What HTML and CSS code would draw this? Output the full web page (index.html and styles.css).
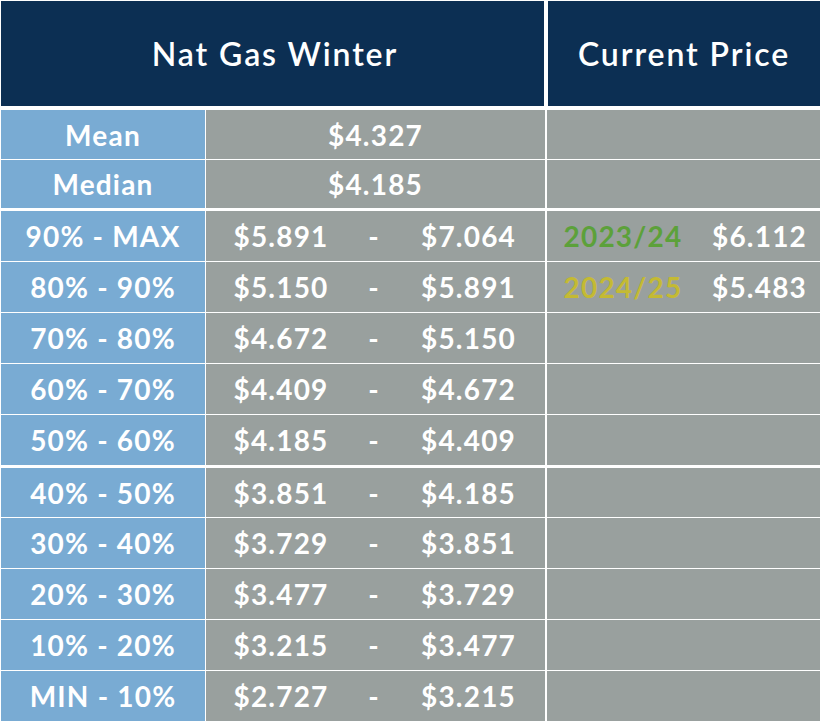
FILE: index.html
```html
<!DOCTYPE html>
<html>
<head>
<meta charset="utf-8">
<link rel="stylesheet" href="styles.css">
</head>
<body>
<div class="table">
  <div class="head">
    <div class="hcell hmain">Nat Gas Winter</div>
    <div class="hcell hside">Current Price</div>
  </div>

  <div class="group">
    <div class="row r49">
      <div class="label">Mean</div>
      <div class="val single">$4.327</div>
      <div class="price"></div>
    </div>
    <div class="row r48">
      <div class="label">Median</div>
      <div class="val single">$4.185</div>
      <div class="price"></div>
    </div>
  </div>

  <div class="group">
    <div class="row">
      <div class="label">90% - MAX</div>
      <div class="val range"><span>$5.891</span><span>-</span><span>$7.064</span></div>
      <div class="price cur"><span class="yr green">2023/24</span><span>$6.112</span></div>
    </div>
    <div class="row">
      <div class="label">80% - 90%</div>
      <div class="val range"><span>$5.150</span><span>-</span><span>$5.891</span></div>
      <div class="price cur"><span class="yr olive">2024/25</span><span>$5.483</span></div>
    </div>
    <div class="row">
      <div class="label">70% - 80%</div>
      <div class="val range"><span>$4.672</span><span>-</span><span>$5.150</span></div>
      <div class="price"></div>
    </div>
    <div class="row">
      <div class="label">60% - 70%</div>
      <div class="val range"><span>$4.409</span><span>-</span><span>$4.672</span></div>
      <div class="price"></div>
    </div>
    <div class="row">
      <div class="label">50% - 60%</div>
      <div class="val range"><span>$4.185</span><span>-</span><span>$4.409</span></div>
      <div class="price"></div>
    </div>
  </div>

  <div class="group">
    <div class="row r49">
      <div class="label">40% - 50%</div>
      <div class="val range"><span>$3.851</span><span>-</span><span>$4.185</span></div>
      <div class="price"></div>
    </div>
    <div class="row">
      <div class="label">30% - 40%</div>
      <div class="val range"><span>$3.729</span><span>-</span><span>$3.851</span></div>
      <div class="price"></div>
    </div>
    <div class="row">
      <div class="label">20% - 30%</div>
      <div class="val range"><span>$3.477</span><span>-</span><span>$3.729</span></div>
      <div class="price"></div>
    </div>
    <div class="row">
      <div class="label">10% - 20%</div>
      <div class="val range"><span>$3.215</span><span>-</span><span>$3.477</span></div>
      <div class="price"></div>
    </div>
    <div class="row">
      <div class="label">MIN - 10%</div>
      <div class="val range"><span>$2.727</span><span>-</span><span>$3.215</span></div>
      <div class="price"></div>
    </div>
  </div>
</div>
</body>
</html>
```

FILE: styles.css
```css
html, body {
  margin: 0;
  padding: 0;
  background: #ffffff;
}

body {
  font-family: Lato, "Liberation Sans", sans-serif;
  color: #ffffff;
}

.table {
  padding: 1px 0 0 1px;
  display: flex;
  flex-direction: column;
  gap: 3px;
  width: 819px;
}

.head {
  display: flex;
  gap: 4px;
  height: 105px;
  margin-bottom: 1px;
}

.hcell {
  background: #0c2f53;
  display: flex;
  align-items: center;
  justify-content: center;
  font-size: 32px;
  font-weight: 600;
  letter-spacing: 1.9px;
}

.hmain {
  width: 543px;
  padding-left: 5px;
  box-sizing: border-box;
}

.hside {
  flex: 1;
}

.group {
  display: flex;
  flex-direction: column;
  gap: 1px;
}

.row {
  display: grid;
  grid-template-columns: 204px 339px 274px;
  column-gap: 1px;
  height: 50px;
  font-size: 28px;
  font-weight: 700;
  letter-spacing: 1.2px;
}

.row.r49 { height: 49px; }
.row.r48 { height: 48px; }

.label {
  background: #79abd3;
  display: flex;
  align-items: center;
  justify-content: center;
}

.val {
  background: #99a09e;
  display: flex;
  align-items: center;
  justify-content: center;
}

.val.range {
  display: grid;
  grid-template-columns: 150px 36px 153px;
  justify-items: center;
}

.price {
  background: #99a09e;
  margin-left: 1px;
}

.price.cur {
  display: grid;
  grid-template-columns: 152px 121px;
  justify-items: center;
  align-items: center;
}

.green { color: #5ca13a; }
.olive { color: #c4ba33; }
```
